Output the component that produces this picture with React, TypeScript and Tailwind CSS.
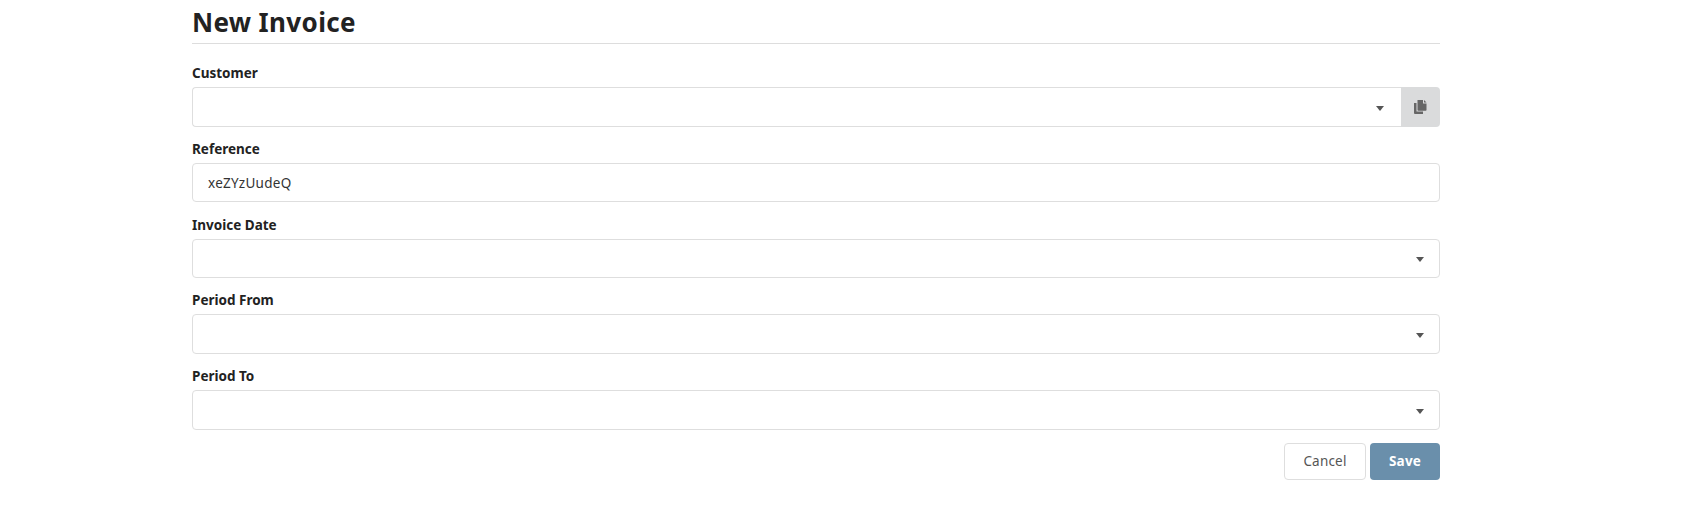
const font = "font-['Noto_Sans','DejaVu_Sans',sans-serif]";

function Caret() {
  return (
    <svg width="8" height="5" viewBox="0 0 8 5" className="mt-[3px] shrink-0">
      <path d="M0 0h8L4 5z" fill="#555555" />
    </svg>
  );
}

function Label({ children }: { children: React.ReactNode }) {
  return <label className="mb-[4px] block h-[19px] text-[13.5px] leading-[19px] font-bold text-[#222222]">{children}</label>;
}

function SelectField({ label }: { label: string }) {
  return (
    <div className="mb-[13.25px]">
      <Label>{label}</Label>
      <div className="flex h-[39.5px] items-center justify-end rounded-[4px] border border-[#dedede] bg-white pr-[15px]">
        <Caret />
      </div>
    </div>
  );
}

export default function App() {
  return (
    <div className={`${font} h-[524px] w-[1682px] overflow-hidden bg-white pr-[242px] pl-[192px]`}>
      <h1 className="h-[44px] border-b border-[#dddddd] pt-[3px] text-[26px] leading-[38px] font-bold tracking-[0.36px] text-[#222222]">New Invoice</h1>
      <div className="pt-[20px]">
        <div className="mb-[13.25px]">
          <Label>Customer</Label>
          <div className="flex h-[39.5px]">
            <div className="flex flex-1 items-center justify-end rounded-l-[4px] border border-r-0 border-[#dedede] bg-white pr-[17px]">
              <Caret />
            </div>
            <div className="flex w-[39px] items-center justify-center rounded-r-[4px] bg-[#dadbdc]">
              <svg width="13" height="14" viewBox="0 0 13 14">
                <path d="M0 3h2.5v8.5H9V14H1a1 1 0 0 1-1-1z" fill="#666666" />
                <path d="M3.5 0H9v3.5h3.5V10a.8.8 0 0 1-.8.8H4.3a.8.8 0 0 1-.8-.8z" fill="#666666" />
                <path d="M10 0l2.5 2.5H10z" fill="#666666" />
              </svg>
            </div>
          </div>
        </div>
        <div className="mb-[13.25px]">
          <Label>Reference</Label>
          <input
            readOnly
            value="xeZYzUudeQ"
            className="block h-[39.5px] w-full rounded-[4px] border border-[#dedede] bg-white px-[15px] text-[13.5px] tracking-[0.3px] text-[#333333] outline-none"
          />
        </div>
        <SelectField label="Invoice Date" />
        <SelectField label="Period From" />
        <SelectField label="Period To" />
        <div className="flex justify-end gap-[4px]">
          <button className="h-[37px] w-[82px] rounded-[4px] border border-[#dedede] bg-white text-[13.5px] tracking-[0.2px] text-[#555555]">Cancel</button>
          <button className="h-[37px] w-[70px] rounded-[4px] bg-[#6a8fab] text-[13.5px] font-bold tracking-[0.2px] text-white">Save</button>
        </div>
      </div>
    </div>
  );
}
